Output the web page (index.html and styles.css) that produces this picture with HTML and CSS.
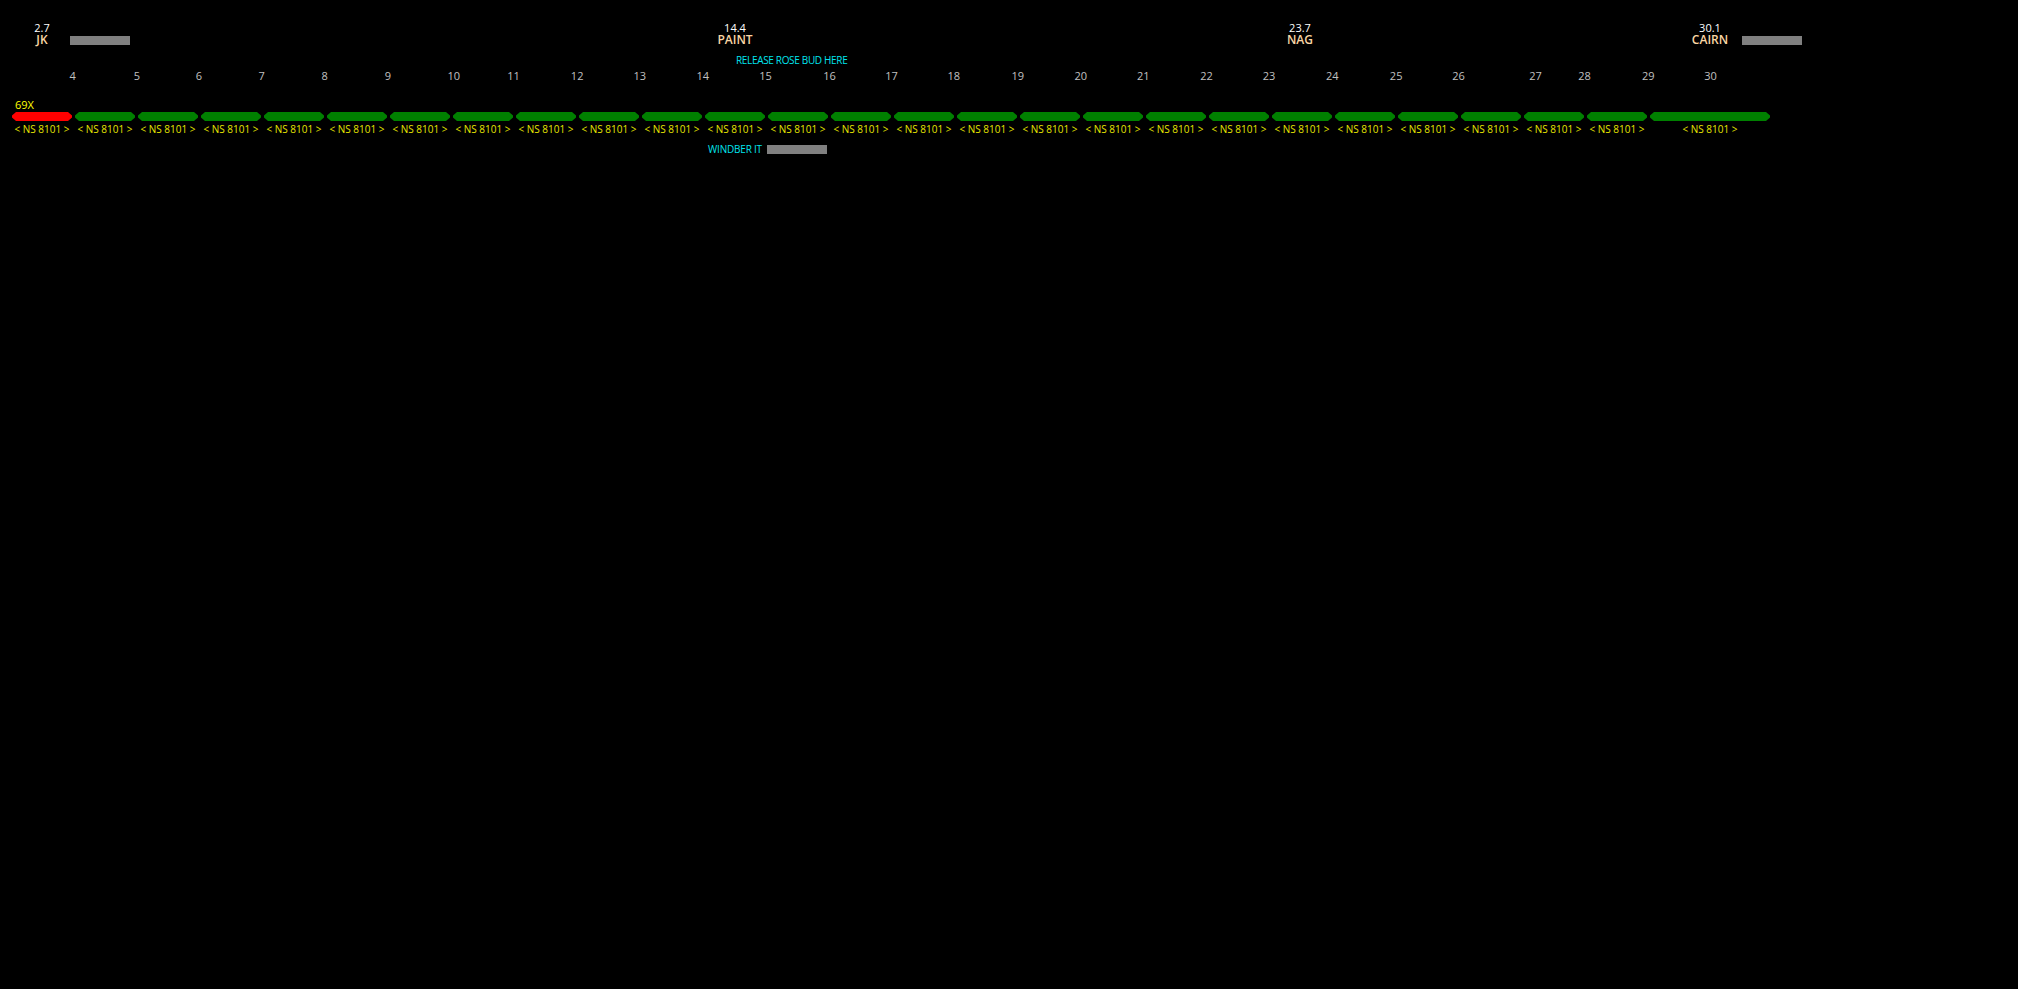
FILE: index.html
```html
<!DOCTYPE html>
<html lang="en">
<head>
<meta charset="utf-8">
<title>Track diagram</title>
<link rel="stylesheet" href="styles.css">
</head>
<body>
<main class="diagram">
  <section class="stations">
    <div class="station station-jk"><span class="station-km">2.7</span><span class="station-name">JK</span></div>
    <div class="marker marker-jk"></div>
    <div class="station station-paint"><span class="station-km">14.4</span><span class="station-name">PAINT</span></div>
    <div class="station station-nag"><span class="station-km">23.7</span><span class="station-name">NAG</span></div>
    <div class="station station-cairn"><span class="station-km">30.1</span><span class="station-name">CAIRN</span></div>
    <div class="marker marker-cairn"></div>
  </section>
  <p class="notice">RELEASE ROSE BUD HERE</p>
  <div class="numbers">
    <span class="num" style="width:64.3px">4</span>
    <span class="num" style="width:62px">5</span>
    <span class="num" style="width:62.7px">6</span>
    <span class="num" style="width:63.2px">7</span>
    <span class="num" style="width:63.1px">8</span>
    <span class="num" style="width:62.8px">9</span>
    <span class="num" style="width:59.8px">10</span>
    <span class="num" style="width:63.6px">11</span>
    <span class="num" style="width:62.6px">12</span>
    <span class="num" style="width:63px">13</span>
    <span class="num" style="width:62.9px">14</span>
    <span class="num" style="width:63.9px">15</span>
    <span class="num" style="width:62px">16</span>
    <span class="num" style="width:62.2px">17</span>
    <span class="num" style="width:64px">18</span>
    <span class="num" style="width:63px">19</span>
    <span class="num" style="width:62.6px">20</span>
    <span class="num" style="width:63.2px">21</span>
    <span class="num" style="width:62.6px">22</span>
    <span class="num" style="width:63.2px">23</span>
    <span class="num" style="width:63.9px">24</span>
    <span class="num" style="width:62.4px">25</span>
    <span class="num" style="width:76.9px">26</span>
    <span class="num" style="width:49px">27</span>
    <span class="num" style="width:63.9px">28</span>
    <span class="num" style="width:62.3px">29</span>
    <span class="num" style="width:40px">30</span>
  </div>
  <p class="train">69X</p>
  <div class="track">
    <div class="block"><div class="seg seg-red"></div><span class="block-label">&lt; NS 8101 &gt;</span></div>
    <div class="block"><div class="seg"></div><span class="block-label">&lt; NS 8101 &gt;</span></div>
    <div class="block"><div class="seg"></div><span class="block-label">&lt; NS 8101 &gt;</span></div>
    <div class="block"><div class="seg"></div><span class="block-label">&lt; NS 8101 &gt;</span></div>
    <div class="block"><div class="seg"></div><span class="block-label">&lt; NS 8101 &gt;</span></div>
    <div class="block"><div class="seg"></div><span class="block-label">&lt; NS 8101 &gt;</span></div>
    <div class="block"><div class="seg"></div><span class="block-label">&lt; NS 8101 &gt;</span></div>
    <div class="block"><div class="seg"></div><span class="block-label">&lt; NS 8101 &gt;</span></div>
    <div class="block"><div class="seg"></div><span class="block-label">&lt; NS 8101 &gt;</span></div>
    <div class="block"><div class="seg"></div><span class="block-label">&lt; NS 8101 &gt;</span></div>
    <div class="block"><div class="seg"></div><span class="block-label">&lt; NS 8101 &gt;</span></div>
    <div class="block"><div class="seg"></div><span class="block-label">&lt; NS 8101 &gt;</span></div>
    <div class="block"><div class="seg"></div><span class="block-label">&lt; NS 8101 &gt;</span></div>
    <div class="block"><div class="seg"></div><span class="block-label">&lt; NS 8101 &gt;</span></div>
    <div class="block"><div class="seg"></div><span class="block-label">&lt; NS 8101 &gt;</span></div>
    <div class="block"><div class="seg"></div><span class="block-label">&lt; NS 8101 &gt;</span></div>
    <div class="block"><div class="seg"></div><span class="block-label">&lt; NS 8101 &gt;</span></div>
    <div class="block"><div class="seg"></div><span class="block-label">&lt; NS 8101 &gt;</span></div>
    <div class="block"><div class="seg"></div><span class="block-label">&lt; NS 8101 &gt;</span></div>
    <div class="block"><div class="seg"></div><span class="block-label">&lt; NS 8101 &gt;</span></div>
    <div class="block"><div class="seg"></div><span class="block-label">&lt; NS 8101 &gt;</span></div>
    <div class="block"><div class="seg"></div><span class="block-label">&lt; NS 8101 &gt;</span></div>
    <div class="block"><div class="seg"></div><span class="block-label">&lt; NS 8101 &gt;</span></div>
    <div class="block"><div class="seg"></div><span class="block-label">&lt; NS 8101 &gt;</span></div>
    <div class="block"><div class="seg"></div><span class="block-label">&lt; NS 8101 &gt;</span></div>
    <div class="block"><div class="seg"></div><span class="block-label">&lt; NS 8101 &gt;</span></div>
    <div class="block block-wide"><div class="seg"></div><span class="block-label">&lt; NS 8101 &gt;</span></div>
  </div>
  <div class="windber">
    <span class="windber-label">WINDBER IT</span>
    <div class="marker marker-windber"></div>
  </div>
</main>
</body>
</html>
```

FILE: styles.css
```css
html, body {
  margin: 0;
  height: 100%;
  background: #000;
}

.diagram {
  font-family: "Open Sans", "Noto Sans", sans-serif;
  font-size: 11px;
  line-height: 12px;
  padding-top: 22px;
  overflow: hidden;
}

.stations {
  display: flex;
  align-items: flex-start;
  height: 24px;
}

.station {
  display: flex;
  flex-direction: column;
  align-items: center;
  width: 40px;
  flex: none;
}

.station-jk { margin-left: 22px; }
.station-paint { margin-left: 585px; }
.station-nag { margin-left: 525px; }
.station-cairn { margin-left: 370px; }

.station-km {
  color: #fff;
  font-size: 11px;
}

.station-name {
  color: #fad6a5;
  font-size: 12px;
  font-weight: 600;
}

.marker {
  flex: none;
  width: 60px;
  height: 9px;
  background: #808080;
}

.marker-jk {
  margin: 14px 0 0 8px;
}

.marker-cairn {
  margin: 14px 0 0 12px;
}

.marker-windber {
  margin-top: 2px;
}

.notice {
  margin: 8px 0 0 736px;
  color: #00e5ee;
  font-size: 10px;
  line-height: 12px;
  letter-spacing: -0.33px;
}

.numbers {
  display: flex;
  margin-top: 4px;
  padding-left: 69.4px;
  height: 12px;
}

.num {
  flex: none;
  color: #c0c0c0;
}

.train {
  margin: 17px 0 0 15px;
  color: #ffff00;
  line-height: 12px;
}

.track {
  display: flex;
  gap: 3px;
  margin-top: 1px;
  padding-left: 12px;
}

.block {
  display: flex;
  flex-direction: column;
  align-items: center;
  flex: none;
  width: 60px;
}

.block-wide {
  width: 120px;
}

.seg {
  align-self: stretch;
  height: 9px;
  background: #008000;
  clip-path: polygon(4px 0, calc(100% - 4px) 0, 100% 3.5px, 100% 5.5px, calc(100% - 4px) 100%, 4px 100%, 0 5.5px, 0 3.5px);
}

.seg-red {
  background: #f00;
}

.block-label {
  margin-top: 2px;
  color: #e6e600;
  font-size: 10px;
  line-height: 12px;
  white-space: nowrap;
}

.windber {
  display: flex;
  align-items: flex-start;
  gap: 5px;
  margin-top: 8px;
  padding-left: 708px;
}

.windber-label {
  color: #00e5ee;
  font-size: 10px;
  line-height: 12px;
  width: 54px;
  white-space: nowrap;
  letter-spacing: -0.2px;
}
```
